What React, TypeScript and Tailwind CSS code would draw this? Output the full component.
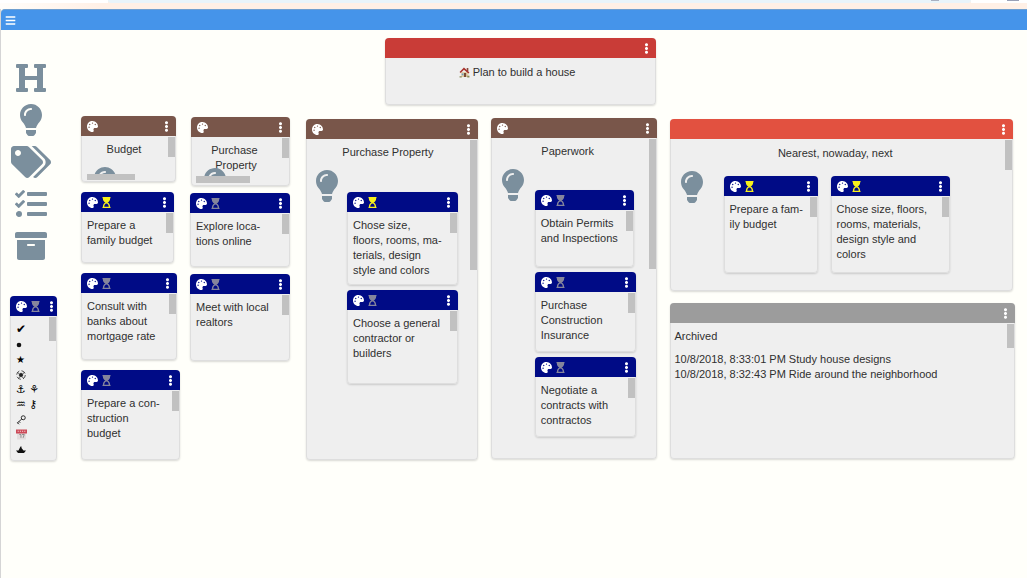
import type { ReactNode } from 'react';
import {
  FaArchive,
  FaBars,
  FaEllipsisV,
  FaHeading,
  FaHourglassStart,
  FaLightbulb,
  FaPalette,
  FaTags,
  FaTasks,
} from 'react-icons/fa';

type CardProps = {
  label: string;
  color: string;
  className: string;
  palette?: boolean;
  hourglass?: 'active' | 'idle';
  narrow?: boolean;
  thumb?: string;
  children: ReactNode;
};

function Card({ label, color, className, palette, hourglass, narrow, thumb, children }: CardProps) {
  return (
    <article
      aria-label={label}
      className={`flex shrink-0 flex-col overflow-hidden rounded bg-[#efefef] shadow-[0_1px_2px_rgba(0,0,0,0.15)] ${className}`}
    >
      <header className={`flex h-5 shrink-0 items-center gap-[3px] pl-1.5 text-white ${color} ${narrow ? '' : 'pr-1'}`}>
        {palette && (
          <button type="button" aria-label="Change color">
            <FaPalette size={11} />
          </button>
        )}
        {hourglass && (
          <button
            type="button"
            aria-label="Toggle in progress"
            className={hourglass === 'active' ? 'text-[#f8f01c]' : 'text-[#85859c]'}
          >
            <FaHourglassStart size={11} />
          </button>
        )}
        <button type="button" aria-label="Card menu" className="ml-auto">
          <FaEllipsisV size={11} />
        </button>
      </header>
      <div className="flex grow rounded-b border-x border-b border-[#dedede] pt-px">
        <div className="mr-[5px] flex min-w-0 grow flex-col">{children}</div>
        <div className={`w-[7px] shrink-0 ${thumb ?? ''}`} />
      </div>
    </article>
  );
}

function Lines({ lines }: { lines: string[] }) {
  return (
    <p className="pt-[5px] pl-[5px] whitespace-nowrap">
      {lines.map((line) => (
        <span key={line} className="block">
          {line}
        </span>
      ))}
    </p>
  );
}

type TaskProps = { lines: string[]; size: string; active?: boolean };

function Task({ lines, size, active }: TaskProps) {
  return (
    <Card
      label={lines.join(' ')}
      color="bg-[#000b86]"
      className={size}
      palette
      hourglass={active ? 'active' : 'idle'}
      thumb="h-5 bg-[#c1c1c1]"
    >
      <Lines lines={lines} />
    </Card>
  );
}

const Bulb = () => <FaLightbulb className="h-8 w-[22px] shrink-0 text-[#7b8f9d]" />;

function House() {
  return (
    <svg viewBox="0 0 20 20" className="h-[11px] w-[11px]" aria-hidden="true">
      <path d="M4 9h13v9H4z" fill="#e3cfa8" />
      <path d="M14 2h3v6h-3z" fill="#8d4a3d" />
      <path d="M1 9 9 1l10 9-2 2-8-7-6 6z" fill="#a8322d" />
      <path d="M9 11h4v7H9z" fill="#7a4b35" />
      <path d="M5 12h3v3H5z" fill="#6aa0c4" />
      <path d="M1 17h4v2H1zM15 16h4v3h-4z" fill="#8a8b55" />
    </svg>
  );
}

function Dot() {
  return (
    <svg viewBox="0 0 20 20" className="h-2.5 w-2.5" fill="#111">
      <circle cx="6" cy="10" r="4.6" />
    </svg>
  );
}

function Rosette() {
  return (
    <svg viewBox="0 0 20 20" className="h-2.5 w-2.5" fill="none" stroke="#222" strokeWidth="1.5">
      <circle cx="10" cy="10" r="8.6" strokeDasharray="9 4.5" />
      <circle cx="10" cy="10" r="3.6" fill="#222" />
      <path d="m3 5 3 2M17 5l-3 2M5 17l2-3M15 17l-2-3" />
    </svg>
  );
}

function Key() {
  return (
    <svg viewBox="0 0 20 20" className="h-2.5 w-2.5" fill="none" stroke="#222" strokeWidth="1.9">
      <circle cx="14.5" cy="5.5" r="4" />
      <path d="M11.5 8 2 16.5M3 15.5l3 3M6 13l2.5 2.5" />
    </svg>
  );
}

function CalendarIcon() {
  return (
    <svg viewBox="0 0 20 20" className="h-[11px] w-[11px]">
      <path d="M2 5h16v14H2z" fill="#e2dcdc" />
      <path d="M0 1h20v7H0z" fill="#cc4a58" />
      <path d="M3 3h2v2H3zM7 3h2v2H7zM11 3h2v2h-2zM15 3h2v2h-2z" fill="#f6d5d7" />
      <path d="M6 10h3v6M11 10h4l-2 6" fill="none" stroke="#777" strokeWidth="1.4" />
    </svg>
  );
}

function Boat() {
  return (
    <svg viewBox="0 0 20 20" className="h-2.5 w-2.5" fill="#111">
      <path d="M9 3h2v8H5zM11 6l4 5h-4zM0 11h20l-4 5H4z" />
    </svg>
  );
}

const symbols: ReactNode[] = [
  <span className="text-[12px]">✔</span>,
  <Dot />,
  '★',
  <Rosette />,
  <span className="text-[11px]">⚓ ⚘</span>,
  <span className="text-[11px]">♒ ⚷</span>,
  <Key />,
  <CalendarIcon />,
  <Boat />,
];

const tools = [
  { name: 'Heading', icon: <FaHeading className="h-8 w-8" /> },
  { name: 'Idea', icon: <FaLightbulb className="h-8 w-[22px]" /> },
  { name: 'Tags', icon: <FaTags className="h-8 w-10" /> },
  { name: 'Checklist', icon: <FaTasks className="h-8 w-8" /> },
  { name: 'Archive', icon: <FaArchive className="h-8 w-8" /> },
];

export default function App() {
  return (
    <div className="flex min-h-screen flex-col bg-[#fffffa] font-['Liberation_Sans',Arial,sans-serif] text-[11px] leading-[15px] text-[#303030]">
      <div className="flex h-[9px] items-start bg-linear-to-r from-[#fffdfa] to-[#fff0e6] to-10%">
        <div className="h-[3px] w-[108px] bg-white" />
        <div className="flex h-[3px] grow justify-end rounded-b-full bg-[#e9f4fa] pr-8">
          <div className="h-px w-2 bg-[#a9b0c0]" />
        </div>
        <div className="flex h-[3px] w-14 justify-end bg-white pr-2">
          <div className="h-px w-3 bg-[#9aa0b5]" />
        </div>
      </div>
      <div className="flex grow flex-col border-l border-[#d5d5d5]">
        <nav className="flex h-[21px] shrink-0 items-center rounded-tl border-t border-[#6f9fd0] bg-[#4594ea] pl-1 text-white">
          <button type="button" aria-label="Main menu">
            <FaBars size={11} />
          </button>
        </nav>

        <div className="flex items-start">
          <aside className="w-20 shrink-0 pt-8">
            <div className="flex w-[60px] flex-col items-center gap-2.5 text-[#7b8f9d]">
              {tools.map((tool) => (
                <button key={tool.name} type="button" aria-label={tool.name}>
                  {tool.icon}
                </button>
              ))}
            </div>
            <Card
              label="Symbols"
              color="bg-[#000b86]"
              className="mt-[34px] ml-[9px] min-h-[165px] w-[47px]"
              palette
              hourglass="idle"
              narrow
              thumb="h-6 bg-[#c1c1c1]"
            >
              <ul className="pt-[5px] pl-[5px] font-['DejaVu_Sans',sans-serif] text-[10px] leading-[15px] whitespace-nowrap text-black">
                {symbols.map((symbol, i) => (
                  <li key={i} className="flex h-[15px] items-center">
                    {symbol}
                  </li>
                ))}
              </ul>
            </Card>
          </aside>

          <main className="min-w-0 grow pt-2 pr-3">
            <Card label="Plan to build a house" color="bg-[#c93c37]" className="ml-[304px] min-h-[67px] w-[271px]">
              <h1 className="flex items-center justify-center gap-[3px] pt-1.5 pl-[5px]">
                <House />
                Plan to build a house
              </h1>
            </Card>

            <div className="mt-[11px] flex items-start gap-[13px]">
              <div className="flex w-[212px] shrink-0 items-start gap-2.5">
                <section className="flex w-[99px] flex-col gap-2.5">
                  <Card label="Budget" color="bg-[#79564a]" className="h-[66px] w-[95px] self-start" palette thumb="h-5 bg-[#c1c1c1]">
                    <h2 className="pt-[5px] pl-[3px] text-center">Budget</h2>
                    <div className="mt-2.5 ml-3 h-[7px] overflow-hidden">
                      <Bulb />
                    </div>
                    <div className="ml-[5px] h-1.5 w-12 bg-[#c1c1c1]" />
                  </Card>
                  <Task lines={['Prepare a', 'family budget']} size="min-h-[71px] w-[93px]" active />
                  <Task lines={['Consult with', 'banks about', 'mortgage rate']} size="min-h-[87px] w-[96px]" />
                  <Task lines={['Prepare a con-', 'struction', 'budget']} size="min-h-[90px] w-[99px]" />
                </section>

                <section className="flex w-[100px] flex-col gap-[7px] pt-px">
                  <Card label="Purchase Property" color="bg-[#79564a]" className="h-[69px] w-[99px] self-end" palette thumb="h-5 bg-[#c1c1c1]">
                    <h2 className="pt-[5px] text-center">
                      Purchase
                      <br />
                      &nbsp;Property
                    </h2>
                    <div className="-mt-[5px] ml-3 h-2 overflow-hidden">
                      <Bulb />
                    </div>
                    <div className="ml-1 h-[7px] w-[54px] bg-[#c1c1c1]" />
                  </Card>
                  <Task lines={['Explore loca-', 'tions online']} size="min-h-[74px] w-[100px]" />
                  <Task lines={['Meet with local', 'realtors']} size="min-h-[87px] w-[100px]" />
                </section>
              </div>

              <section className="flex min-w-0 grow-[172] basis-0 flex-col pt-[3px]">
                <Card label="Purchase Property plan" color="bg-[#79564a]" className="min-h-[341px]" palette thumb="h-[130px] bg-[#c1c1c1]">
                  <h2 className="pt-[5px] pl-1 text-center">Purchase Property</h2>
                  <div className="flex items-start gap-[9px] pt-2.5 pl-[9px]">
                    <Bulb />
                    <div className="flex flex-col gap-[5px] pt-[22px]">
                      <Task lines={['Chose size,', 'floors, rooms, ma-', 'terials, design', 'style and colors']} size="min-h-[93px] w-[111px]" active />
                      <Task lines={['Choose a general', 'contractor or', 'builders']} size="min-h-[94px] w-[111px]" />
                    </div>
                  </div>
                </Card>
              </section>

              <section className="flex min-w-0 grow-[166] basis-0 flex-col pt-0.5">
                <Card label="Paperwork" color="bg-[#79564a]" className="min-h-[341px]" palette thumb="h-[130px] bg-[#c1c1c1]">
                  <h2 className="pt-[5px] text-center">Paperwork</h2>
                  <div className="flex items-start gap-[11px] pt-2.5 pl-2.5">
                    <Bulb />
                    <div className="flex flex-col gap-[5px] pt-[21px]">
                      <Task lines={['Obtain Permits', 'and Inspections']} size="min-h-[77px] w-[99px]" />
                      <Task lines={['Purchase', 'Construction', 'Insurance']} size="min-h-20 w-[101px]" />
                      <Task lines={['Negotiate a', 'contracts with', 'contractos']} size="min-h-20 w-[101px]" />
                    </div>
                  </div>
                </Card>
              </section>

              <section className="flex min-w-0 grow-[346] basis-0 flex-col gap-3 pt-[3px]">
                <Card label="Nearest, nowaday, next" color="bg-[#e25140]" className="mr-0.5 min-h-[172px]" thumb="h-[30px] bg-[#c1c1c1]">
                  <h2 className="pt-1.5 text-center">Nearest, nowaday, next</h2>
                  <div className="flex items-start gap-[21px] pt-2.5 pl-2.5">
                    <Bulb />
                    <div className="flex items-start gap-[13px] pt-[5px]">
                      <Task lines={['Prepare a fam-', 'ily budget']} size="min-h-[97px] w-[94px]" active />
                      <Task lines={['Chose size, floors,', 'rooms, materials,', 'design style and', 'colors']} size="min-h-[97px] w-[119px]" active />
                    </div>
                  </div>
                </Card>
                <Card label="Archived tasks" color="bg-[#9c9c9c]" className="min-h-[156px]" thumb="h-6 bg-[#c1c1c1]">
                  <h2 className="pt-[5px] pl-1">Archived</h2>
                  <ul className="pt-2 pl-1 whitespace-nowrap">
                    <li>10/8/2018, 8:33:01 PM Study house designs</li>
                    <li>10/8/2018, 8:32:43 PM Ride around the neighborhood</li>
                  </ul>
                </Card>
              </section>
            </div>
          </main>
        </div>
      </div>
    </div>
  );
}
